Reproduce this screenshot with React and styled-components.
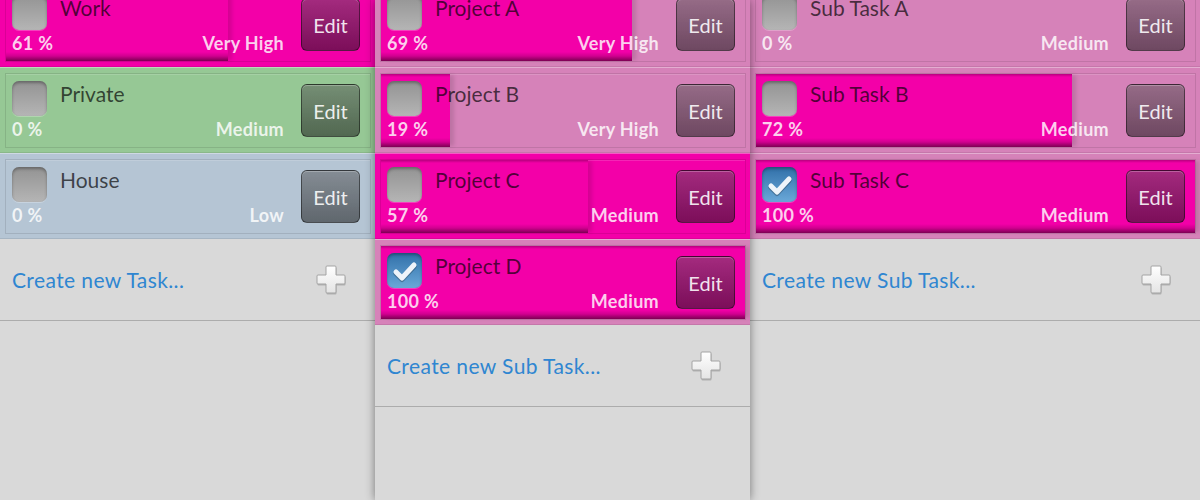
import React from 'react';
import styled, { createGlobalStyle } from 'styled-components';

const magenta = '#f300a8';
const pink = '#d682b9';
const green = '#96c895';
const slate = '#b5c5d4';
const panelGray = '#d9d9d9';

const GlobalStyle = createGlobalStyle`
    html, body {
        margin: 0;
        padding: 0;
        height: 500px;
        overflow: hidden;
        background: ${panelGray};
        font-family: Lato, "Open Sans", "Liberation Sans", sans-serif;
    }
`;

const Screen = styled.div`
    display: flex;
    width: 1200px;
    height: 500px;
    overflow: hidden;
`;

const Column = styled.div`
    width: ${p => p.$width}px;
    flex-shrink: 0;
    height: 500px;
    background: ${panelGray};
    position: relative;
    z-index: ${p => (p.$raised ? 2 : 1)};
    box-shadow: ${p => (p.$raised ? '0 0 9px rgba(0,0,0,0.45)' : 'none')};
    overflow: hidden;
`;

const List = styled.div`
    display: flex;
    flex-direction: column;
    margin-top: -19px;
`;

const Row = styled.div`
    height: 86px;
    box-sizing: border-box;
    display: flex;
    flex-direction: column;
    background: ${p => p.$bg};
    border-top: 1px solid rgba(255,255,255,0.35);
    border-bottom: 1px solid rgba(0,0,0,0.08);
`;

const Inner = styled.div`
    flex: 1;
    position: relative;
    display: flex;
    align-items: center;
    margin: 5px 4px 4px 5px;
    padding: 0 10px 0 6px;
    border: 1px solid rgba(0,0,0,0.1);
    box-shadow: inset 0 1px 0 rgba(255,255,255,0.15);
`;

const Fill = styled.div`
    position: absolute;
    left: 0;
    top: 0;
    bottom: 0;
    background: linear-gradient(
        to bottom,
        #b8007e 0,
        ${magenta} 3px,
        ${magenta} calc(100% - 9px),
        #d10090 calc(100% - 5px),
        #7c0052 100%
    );
    box-shadow: 5px 0 4px -1px rgba(0,0,0,0.12);
`;

const Main = styled.div`
    flex: 1;
    align-self: stretch;
    position: relative;
    display: flex;
    flex-direction: column;
    padding-top: 7px;
    margin-right: 17px;
`;

const TopLine = styled.div`
    display: flex;
    gap: 13px;
`;

const CheckBox = styled.div`
    width: 35px;
    height: 35px;
    flex-shrink: 0;
    box-sizing: border-box;
    border-radius: 7px;
    background: ${p => (p.$checked
        ? 'linear-gradient(to bottom, #3170a9, #6aa8d8)'
        : 'linear-gradient(to bottom, #939393, #b5b5b5)')};
    box-shadow: inset 0 2px 3px rgba(0,0,0,0.3), 0 1px 0 rgba(255,255,255,0.25);
    display: flex;
    align-items: center;
    justify-content: center;
`;

const Title = styled.div`
    font-size: 21px;
    line-height: 21px;
    margin-top: 2px;
    color: rgba(0,0,0,0.68);
    white-space: nowrap;
`;

const BottomLine = styled.div`
    display: flex;
    justify-content: space-between;
    margin-top: 4px;
    font-size: 18px;
    line-height: 18px;
    font-weight: 700;
    letter-spacing: 0.3px;
    color: rgba(255,255,255,0.82);
`;

const EditButton = styled.div`
    position: relative;
    width: 59px;
    height: 53px;
    flex-shrink: 0;
    box-sizing: border-box;
    border-radius: 6px;
    border: 1px solid rgba(0,0,0,0.45);
    background: linear-gradient(to bottom, rgba(85,85,85,0.5), rgba(25,25,25,0.55));
    box-shadow: inset 0 1px 0 rgba(255,255,255,0.25);
    display: flex;
    align-items: center;
    justify-content: center;
    font-size: 20px;
    color: rgba(255,255,255,0.9);
`;

const CreateRow = styled.div`
    height: 82px;
    box-sizing: border-box;
    display: flex;
    align-items: center;
    justify-content: space-between;
    padding: 0 26px 0 12px;
    border-bottom: 1px solid #acacac;
    font-size: 21px;
    letter-spacing: 0.4px;
    color: #2f86d1;
`;

const Check = () => (
    <svg width="28" height="24" viewBox="0 0 28 24">
        <polyline points="5,13 11,19 23,6" fill="none" stroke="rgba(0,0,0,0.25)"
            strokeWidth="5" strokeLinecap="round" strokeLinejoin="round" transform="translate(0,1.5)" />
        <polyline points="5,13 11,19 23,6" fill="none" stroke="#eef4fa"
            strokeWidth="5" strokeLinecap="round" strokeLinejoin="round" />
    </svg>
);

const Plus = () => (
    <svg width="34" height="34" viewBox="0 0 34 34">
        <defs>
            <linearGradient id="plusFace" x1="0" y1="0" x2="0" y2="1">
                <stop offset="0" stopColor="#ffffff" />
                <stop offset="1" stopColor="#e4e4e4" />
            </linearGradient>
        </defs>
        <path d="M12 3h8a1 1 0 0 1 1 1v8h8a1 1 0 0 1 1 1v7a1 1 0 0 1-1 1h-8v8a1 1 0 0 1-1 1h-8a1 1 0 0 1-1-1v-8H3a1 1 0 0 1-1-1v-7a1 1 0 0 1 1-1h8V4a1 1 0 0 1 1-1z"
            fill="rgba(0,0,0,0.18)" transform="translate(0.5,1.5)" />
        <path d="M12 3h8a1 1 0 0 1 1 1v8h8a1 1 0 0 1 1 1v7a1 1 0 0 1-1 1h-8v8a1 1 0 0 1-1 1h-8a1 1 0 0 1-1-1v-8H3a1 1 0 0 1-1-1v-7a1 1 0 0 1 1-1h8V4a1 1 0 0 1 1-1z"
            fill="url(#plusFace)" stroke="#a3a3a3" strokeWidth="1" />
    </svg>
);

const TaskRow = ({ task }) => (
    <Row $bg={task.selected ? magenta : task.tint}>
        <Inner>
            {task.pct > 0 && <Fill style={{ width: `${task.pct}%` }} />}
            <Main>
                <TopLine>
                    <CheckBox $checked={task.done}>{task.done && <Check />}</CheckBox>
                    <Title>{task.title}</Title>
                </TopLine>
                <BottomLine>
                    <span>{task.pct} %</span>
                    <span>{task.priority}</span>
                </BottomLine>
            </Main>
            <EditButton>Edit</EditButton>
        </Inner>
    </Row>
);

const TaskColumn = ({ width, raised, tasks, createLabel }) => (
    <Column $width={width} $raised={raised}>
        <List>
            {tasks.map(t => <TaskRow key={t.title} task={t} />)}
            <CreateRow>
                <span>{createLabel}</span>
                <Plus />
            </CreateRow>
        </List>
    </Column>
);

const categories = [
    { title: 'Work', pct: 61, priority: 'Very High', tint: pink, selected: true },
    { title: 'Private', pct: 0, priority: 'Medium', tint: green },
    { title: 'House', pct: 0, priority: 'Low', tint: slate },
];

const projects = [
    { title: 'Project A', pct: 69, priority: 'Very High', tint: pink },
    { title: 'Project B', pct: 19, priority: 'Very High', tint: pink },
    { title: 'Project C', pct: 57, priority: 'Medium', tint: pink, selected: true },
    { title: 'Project D', pct: 100, priority: 'Medium', tint: pink, done: true },
];

const subTasks = [
    { title: 'Sub Task A', pct: 0, priority: 'Medium', tint: pink },
    { title: 'Sub Task B', pct: 72, priority: 'Medium', tint: pink },
    { title: 'Sub Task C', pct: 100, priority: 'Medium', tint: pink, done: true },
];

const App = () => {
    return (
        <>
            <GlobalStyle />
            <Screen>
                <TaskColumn width={375} tasks={categories} createLabel="Create new Task..." />
                <TaskColumn width={375} raised tasks={projects} createLabel="Create new Sub Task..." />
                <TaskColumn width={450} tasks={subTasks} createLabel="Create new Sub Task..." />
            </Screen>
        </>
    );
};

export default App;
